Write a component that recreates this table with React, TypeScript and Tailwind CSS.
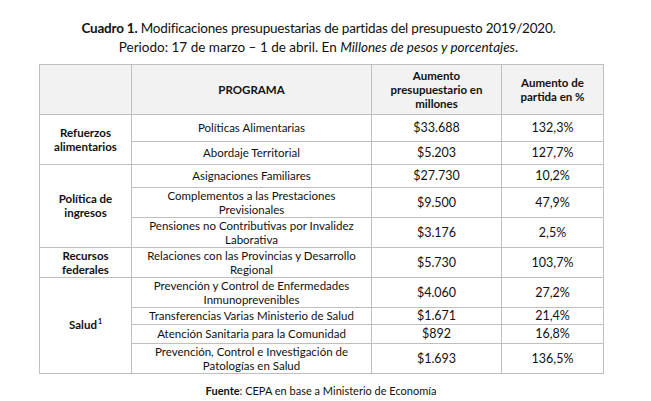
import React from 'react';

interface Row {
    programa: string[];
    monto: string;
    pct: string;
    h: string;
}

interface Group {
    label: React.ReactNode;
    rows: Row[];
}

const groups: Group[] = [
    {
        label: <>Refuerzos<br />alimentarios</>,
        rows: [
            { programa: ['Políticas Alimentarias'], monto: '$33.688', pct: '132,3%', h: 'h-[27px]' },
            { programa: ['Abordaje Territorial'], monto: '$5.203', pct: '127,7%', h: 'h-[23px]' },
        ],
    },
    {
        label: <>Política de<br />ingresos</>,
        rows: [
            { programa: ['Asignaciones Familiares'], monto: '$27.730', pct: '10,2%', h: 'h-[23px]' },
            { programa: ['Complementos a las Prestaciones', 'Previsionales'], monto: '$9.500', pct: '47,9%', h: 'h-[30px]' },
            { programa: ['Pensiones no Contributivas por Invalidez', 'Laborativa'], monto: '$3.176', pct: '2,5%', h: 'h-[30px]' },
        ],
    },
    {
        label: <>Recursos<br />federales</>,
        rows: [
            { programa: ['Relaciones con las Provincias y Desarrollo', 'Regional'], monto: '$5.730', pct: '103,7%', h: 'h-[30px]' },
        ],
    },
    {
        label: <>Salud<span className="text-[7px] font-bold relative -top-[5px] ml-[1px]">1</span></>,
        rows: [
            { programa: ['Prevención y Control de Enfermedades', 'Inmunoprevenibles'], monto: '$4.060', pct: '27,2%', h: 'h-[30px]' },
            { programa: ['Transferencias Varias Ministerio de Salud'], monto: '$1.671', pct: '21,4%', h: 'h-[17px]' },
            { programa: ['Atención Sanitaria para la Comunidad'], monto: '$892', pct: '16,8%', h: 'h-[19px]' },
            { programa: ['Prevención, Control e Investigación de', 'Patologías en Salud'], monto: '$1.693', pct: '136,5%', h: 'h-[30px]' },
        ],
    },
];

const cell = 'border border-[#bfbfbf] text-center align-middle p-0';

export default function App() {
    return (
        <div className="w-[651px] h-[401px] bg-white text-[#111] font-['Lato',sans-serif] overflow-hidden">
            <div className="pt-[19px] pr-[14px] text-center text-[13.5px] leading-[19px]">
                <p className="tracking-[-0.2px]"><span className="font-bold">Cuadro 1.</span> Modificaciones presupuestarias de partidas del presupuesto 2019/2020.</p>
                <p>Periodo: 17 de marzo – 1 de abril. En <span className="italic">Millones de pesos y porcentajes</span>.</p>
            </div>

            <table className="ml-[39px] mt-[7px] border-collapse table-fixed w-[564px] text-[11.5px] leading-[14px]">
                <colgroup>
                    <col className="w-[92px]" />
                    <col className="w-[240px]" />
                    <col className="w-[130px]" />
                    <col className="w-[102px]" />
                </colgroup>
                <thead>
                    <tr className="h-[50px] bg-[#f2f2f2] font-bold">
                        <th className={cell}></th>
                        <th className={cell}>PROGRAMA</th>
                        <th className={cell}>Aumento<br />presupuestario en<br />millones</th>
                        <th className={cell}>Aumento de<br />partida en %</th>
                    </tr>
                </thead>
                <tbody>
                    {groups.map((g, gi) =>
                        g.rows.map((r, ri) => (
                            <tr key={`${gi}-${ri}`} className={r.h}>
                                {ri === 0 && (
                                    <td rowSpan={g.rows.length} className={`${cell} font-bold`}>
                                        {g.label}
                                    </td>
                                )}
                                <td className={cell}>
                                    {r.programa.map((line, li) => (
                                        <div key={li}>{line}</div>
                                    ))}
                                </td>
                                <td className={`${cell} text-[12.5px]`}>{r.monto}</td>
                                <td className={`${cell} text-[12.5px]`}>{r.pct}</td>
                            </tr>
                        ))
                    )}
                </tbody>
            </table>

            <p className="mt-[9px] ml-[39px] w-[564px] text-center text-[11px]">
                <span className="font-bold">Fuente</span>: CEPA en base a Ministerio de Economía
            </p>
        </div>
    );
}
